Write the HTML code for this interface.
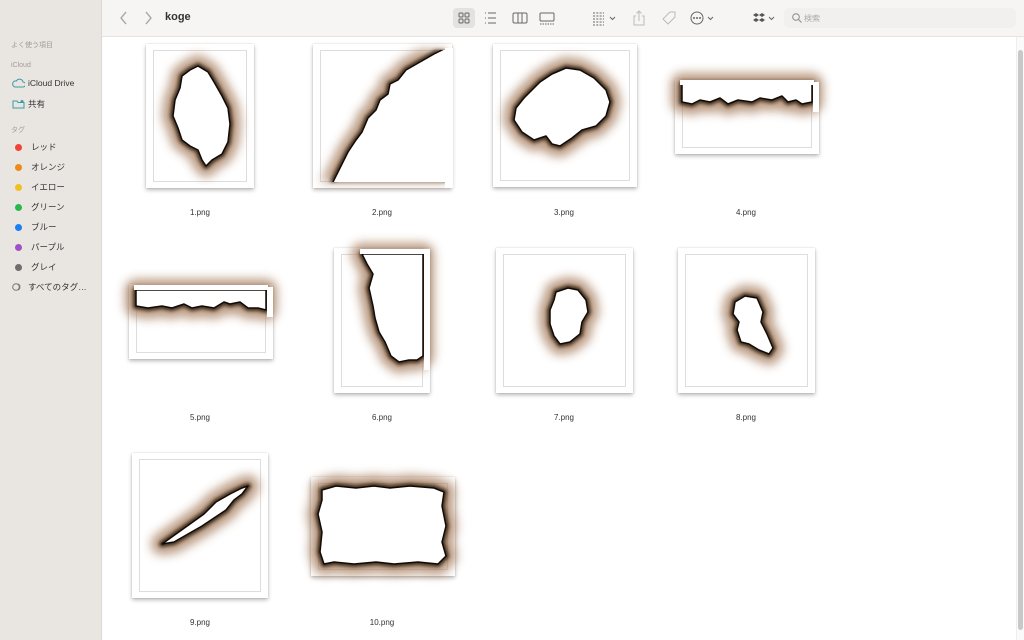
<!DOCTYPE html>
<html><head><meta charset="utf-8"><style>
*{margin:0;padding:0;box-sizing:border-box}
body{width:1024px;height:640px;overflow:hidden;font-family:"Liberation Sans","Noto Sans CJK JP",sans-serif;background:#fff;position:relative}
#side{position:absolute;left:0;top:0;width:102px;height:640px;background:#e9e5e0;border-right:1px solid #dcd8d3}
.sh{position:absolute;left:11px;font-size:7px;color:#a09c98}
.it{position:absolute;left:14px;font-size:8.5px;color:#333;display:flex;align-items:center}
.dot{width:7px;height:7px;border-radius:50%;margin-right:9px;margin-left:1px}
#tb{position:absolute;left:102px;top:0;right:0;height:37px;background:#f6f5f3;border-bottom:1px solid #e6e4e1}
.fr{position:absolute;background:#fff;box-shadow:0 2px 4px rgba(0,0,0,.28),0 0 1px rgba(0,0,0,.2)}
.fr i{position:absolute;left:7px;top:6px;right:7px;bottom:6px;border:1px solid #ddd}
.lb{position:absolute;font-size:8px;color:#333;width:80px;text-align:center}
</style></head><body>
<div id="side">
<div class="sh" style="top:40px">よく使う項目</div>
<div class="sh" style="top:62px">iCloud</div>
<div class="it" style="top:78px;left:12px"><svg width="13" height="10" style="margin-right:3px"><path d="M3 9h8a2.5 2.5 0 0 0 0-5 3.5 3.5 0 0 0-6.5-1A3 3 0 0 0 3 9z" fill="none" stroke="#3a9aa8" stroke-width="1"/></svg>iCloud Drive</div>
<div class="it" style="top:98px;left:12px"><svg width="13" height="10" style="margin-right:3px"><path d="M1 2h4l1 1.5h6V9H1z" fill="none" stroke="#3a9aa8" stroke-width="1"/><circle cx="10" cy="2.5" r="1.5" fill="#3a9aa8"/></svg>共有</div>
<div class="sh" style="top:125px">タグ</div>
<div class="it" style="top:141px"><span class="dot" style="background:#f0443a"></span>レッド</div>
<div class="it" style="top:161px"><span class="dot" style="background:#ef8a18"></span>オレンジ</div>
<div class="it" style="top:181px"><span class="dot" style="background:#f0c020"></span>イエロー</div>
<div class="it" style="top:201px"><span class="dot" style="background:#2ab84a"></span>グリーン</div>
<div class="it" style="top:221px"><span class="dot" style="background:#1a80f0"></span>ブルー</div>
<div class="it" style="top:241px"><span class="dot" style="background:#a050c8"></span>パープル</div>
<div class="it" style="top:261px"><span class="dot" style="background:#6e6e6e"></span>グレイ</div>
<div class="it" style="top:281px;left:12px"><svg width="11" height="8" style="margin-right:5px"><circle cx="4" cy="4" r="3.3" fill="none" stroke="#777"/><path d="M6 1a3.3 3.3 0 0 1 0 6" fill="none" stroke="#777"/></svg>すべてのタグ…</div>
</div>
<div id="tb">
<svg width="60" height="37" style="position:absolute;left:10px;top:0"><path d="M14 12l-5 6 5 6" fill="none" stroke="#aaa" stroke-width="1.4"/><path d="M34 12l5 6-5 6" fill="none" stroke="#aaa" stroke-width="1.4"/></svg>
<div style="position:absolute;left:63px;top:11px;font-size:11px;font-weight:bold;color:#333">koge</div>
<div style="position:absolute;left:351px;top:8px;width:22px;height:20px;background:#e4e2df;border-radius:4px"></div>
<div style="position:absolute;left:682px;top:8px;width:232px;height:20px;background:#f1f0ee;border-radius:5px"></div>
<div style="position:absolute;left:702px;top:13px;font-size:8px;color:#aaa">検索</div>
<svg width="480" height="37" style="position:absolute;left:340px;top:0" fill="none" stroke="#666" stroke-width="1">
<rect x="17" y="13" width="4" height="4" rx="1"/><rect x="23" y="13" width="4" height="4" rx="1"/><rect x="17" y="19" width="4" height="4" rx="1"/><rect x="23" y="19" width="4" height="4" rx="1"/>
<path d="M43 13h1M43 18h1M43 23h1M46 13h8M46 18h8M46 23h8"/>
<rect x="71" y="13" width="14" height="10" rx="1.5"/><path d="M76 13v10M80 13v10"/>
<rect x="98" y="13" width="14" height="8" rx="1"/><path d="M98 24h14" stroke-dasharray="1.5 1"/>
<path d="M151 13h11M151 16h11M151 19h11M151 22h11M151 25h11" stroke-dasharray="2 1.3"/><path d="M168 17l2.5 2.5 2.5-2.5"/>
<path d="M194 16h-2v9h10v-9h-2M197 21v-10M194.5 13.5l2.5-2.5 2.5 2.5" stroke="#bbb"/>
<path d="M221 19l7-7h5v5l-7 7z" stroke="#bbb"/>
<circle cx="255" cy="18" r="6"/><circle cx="252" cy="18" r=".5" fill="#666"/><circle cx="255" cy="18" r=".5" fill="#666"/><circle cx="258" cy="18" r=".5" fill="#666"/><path d="M266 17l2.5 2.5 2.5-2.5"/>
<path d="M314 13l3 2-3 2-3-2zM320 13l3 2-3 2-3-2zM314 18l3 2-3 2-3-2zM320 18l3 2-3 2-3-2z" fill="#555" stroke="none"/><path d="M327 17l2.5 2.5 2.5-2.5"/>
<circle cx="354" cy="17" r="3.3" stroke="#888"/><path d="M356.5 19.5l3 3" stroke="#888"/>
</svg>
</div>
<div style="position:absolute;right:0;top:37px;width:8px;height:603px;background:#fafafa;border-left:1px solid #eee"></div>
<div style="position:absolute;right:1px;top:50px;width:5px;height:580px;background:#c8c8c8;border-radius:3px"></div>

<div class="fr" style="left:146px;top:44px;width:108px;height:144px"><i></i></div>
<div class="fr" style="left:313px;top:44px;width:139px;height:144px"><i></i></div>
<div class="fr" style="left:493px;top:44px;width:144px;height:143px"><i></i></div>
<div class="fr" style="left:675px;top:79px;width:144px;height:75px"><i></i></div>
<div class="fr" style="left:129px;top:284px;width:144px;height:75px"><i></i></div>
<div class="fr" style="left:334px;top:248px;width:96px;height:145px"><i></i></div>
<div class="fr" style="left:496px;top:248px;width:137px;height:145px"><i></i></div>
<div class="fr" style="left:678px;top:248px;width:137px;height:145px"><i></i></div>
<div class="fr" style="left:132px;top:453px;width:136px;height:145px"><i></i></div>
<div class="fr" style="left:311px;top:477px;width:144px;height:99px"><i></i></div>

<svg width="1024" height="640" style="position:absolute;left:0;top:0">
<defs><filter id="b" x="-50%" y="-50%" width="200%" height="200%"><feGaussianBlur stdDeviation="5"/></filter>
<filter id="d" x="-20%" y="-20%" width="140%" height="140%"><feGaussianBlur stdDeviation="1.5"/></filter>
<clipPath id="c2"><rect x="320" y="50" width="126" height="132"/></clipPath></defs>
<g stroke="#a47a5a" stroke-width="22" fill="none" opacity=".75" filter="url(#b)" stroke-linejoin="round">
<path id="p1" d="M198 66L208 72L214 82L222 96L228 108L230 124L228 142L222 154L212 160L206 166L202 160L198 150L190 146L182 140L178 128L173 116L175 100L180 88L182 76L190 70Z"/>
<path id="p2" clip-path="url(#c2)" d="M332 184L340 168L348 152L356 140L362 132L368 118L376 110L380 100L388 94L390 84L398 80L406 70L420 62L434 54L446 48L446 184Z"/>
<path id="p3" d="M540 82L552 74L566 68L580 70L594 78L606 90L610 102L606 116L596 126L582 130L572 138L560 146L552 144L546 136L534 140L522 132L514 120L516 108L524 98L532 90Z"/>
<path id="p4" d="M682 84H812V102L802 104L796 100L788 102L782 96L772 100L760 98L752 102L738 100L728 104L720 98L710 102L700 100L692 104L682 102Z"/>
<path id="p5" d="M136 290H266V310L258 308L248 308L240 302L230 304L224 302L214 308L202 306L192 308L184 304L172 308L162 306L148 308L136 306Z"/>
<path id="p6" d="M362 254H423V356L417 360L409 360L399 362L391 356L385 342L379 332L375 318L373 306L369 288L373 274L367 264Z"/>
<path id="p7" d="M556 292L568 288L578 290L586 300L588 312L582 322L580 334L570 342L560 344L554 336L550 324L550 310L554 300Z"/>
<path id="p8" d="M735 302L745 296L757 298L763 312L761 322L767 334L773 348L769 354L759 350L749 344L741 342L737 330L739 322L733 314Z"/>
<path id="p9" d="M162 544L176 534L190 524L204 514L216 502L230 494L242 488L248 486L242 494L234 500L226 510L214 518L202 526L188 534L174 542Z"/>
<path id="p10" d="M322 490L336 486L356 488L374 486L390 488L410 486L434 488L444 492L442 506L446 526L442 542L446 556L438 564L418 562L394 564L376 562L354 564L334 562L324 564L320 552L322 532L318 514L322 500Z"/>
</g>
<g stroke="#2a1a10" stroke-width="6" fill="none" filter="url(#d)" stroke-linejoin="round" opacity=".85">
<use href="#p1"/><use href="#p2"/><use href="#p3"/><use href="#p4"/><use href="#p5"/><use href="#p6"/><use href="#p7"/><use href="#p8"/><use href="#p9"/><use href="#p10"/>
</g>
<g stroke="#120a05" stroke-width="1.5" fill="#fff" stroke-linejoin="round">
<use href="#p1"/><use href="#p2"/><use href="#p3"/><use href="#p4"/><use href="#p5"/><use href="#p6"/><use href="#p7"/><use href="#p8"/><use href="#p9"/><use href="#p10"/>
</g>
<g fill="#fff"><rect x="445" y="48" width="8" height="140"/><rect x="813" y="82" width="6" height="30"/><rect x="267" y="287" width="6" height="30"/><rect x="424" y="250" width="6" height="120"/><rect x="680" y="80" width="134" height="5"/><rect x="134" y="285" width="134" height="5"/><rect x="360" y="249" width="70" height="5"/></g>
</svg>

<div class="lb" style="left:160px;top:208px">1.png</div>
<div class="lb" style="left:342px;top:208px">2.png</div>
<div class="lb" style="left:524px;top:208px">3.png</div>
<div class="lb" style="left:706px;top:208px">4.png</div>
<div class="lb" style="left:160px;top:413px">5.png</div>
<div class="lb" style="left:342px;top:413px">6.png</div>
<div class="lb" style="left:524px;top:413px">7.png</div>
<div class="lb" style="left:706px;top:413px">8.png</div>
<div class="lb" style="left:160px;top:618px">9.png</div>
<div class="lb" style="left:342px;top:618px">10.png</div>
</body></html>
